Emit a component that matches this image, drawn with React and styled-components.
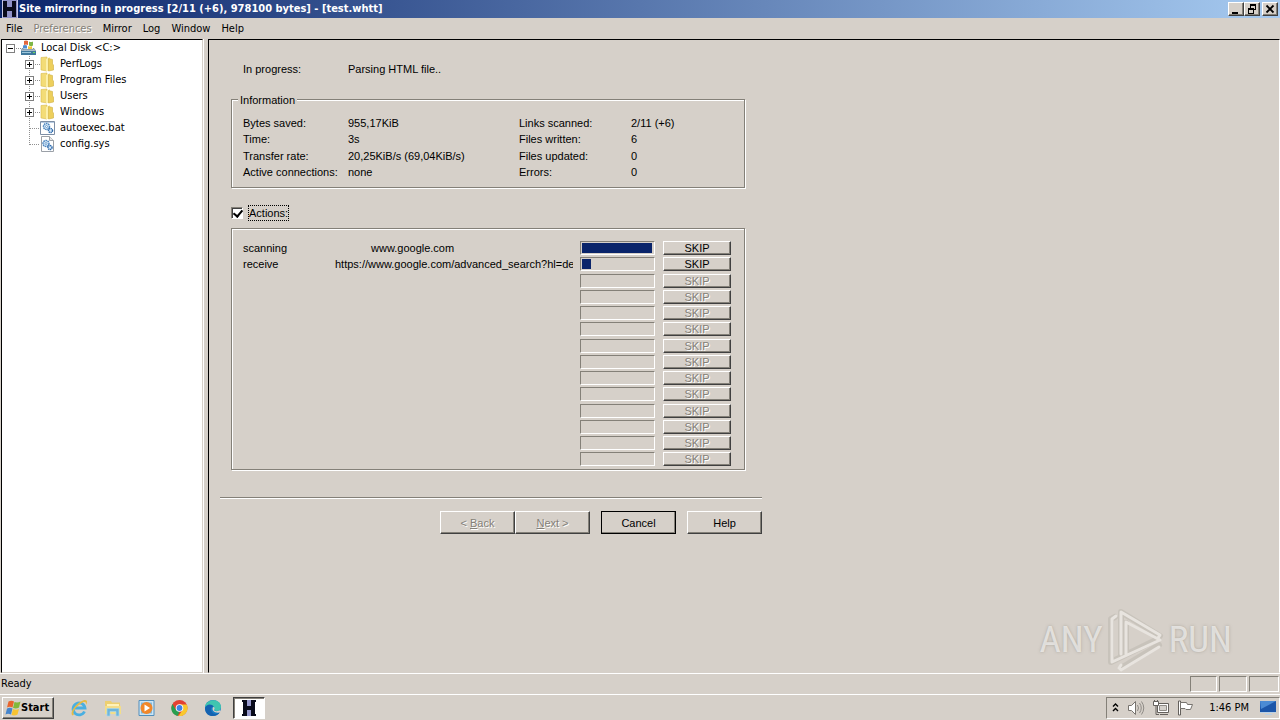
import React from "react";
import styled, { createGlobalStyle, css } from "styled-components";

const face = "#d6d0c9";
const shade = "#848078";
const dark = "#404040";
const light = "#ffffff";
const navy = "#0a246a";
const uiFont = '"DejaVu Sans Condensed", "DejaVu Sans", sans-serif';
const dialogFont = '"Liberation Sans", Arial, sans-serif';

const GlobalStyle = createGlobalStyle`
  * { box-sizing: border-box; }
  body { margin: 0; background: ${face}; color: #000; font: 11px/16px ${uiFont}; }
  button, input { font: inherit; color: inherit; }
`;

const raised = css`
  background: ${face};
  border: 1px solid;
  border-color: ${light} ${dark} ${dark} ${light};
  box-shadow: inset -1px -1px 0 ${shade};
`;

const sunken = css`
  border: 1px solid;
  border-color: ${shade} ${light} ${light} ${shade};
`;

const Desktop = styled.div`
  position: relative;
  display: flex;
  flex-direction: column;
  min-height: 100vh;
`;

const TitleBar = styled.header`
  display: flex;
  align-items: center;
  height: 18px;
  padding: 0 2px;
  color: #fff;
  background: linear-gradient(90deg, ${navy}, #a6caf0);
`;

const Title = styled.h1`
  flex: 1;
  margin: 0 0 0 1px;
  font-size: 11px;
  font-weight: bold;
  white-space: nowrap;
`;

const CaptionButton = styled.button`
  ${raised}
  display: flex;
  align-items: center;
  justify-content: center;
  width: 16px;
  height: 14px;
  padding: 0;
  margin-left: ${(p) => (p.$apart ? 2 : 0)}px;
`;

const MenuBar = styled.nav`
  display: flex;
  height: 21px;
  padding-left: 1px;
`;

const MenuItem = styled.button`
  padding: 0 6px 0 5px;
  border: 0;
  background: none;
  white-space: nowrap;

  &:disabled {
    color: ${shade};
    text-shadow: 1px 1px 0 ${light};
  }
`;

const Workspace = styled.div`
  display: flex;
  flex: 1;
`;

const TreePane = styled.aside`
  flex: 0 0 202px;
  margin-left: 1px;
  padding-left: 4px;
  background: #fff;
  border: 1px solid;
  border-color: #000 ${face} ${face} #000;
`;

const Splitter = styled.div`
  width: 5px;
  border-left: 1px solid ${light};
`;

const MainPane = styled.main`
  flex: 1;
  padding: 21px 11px;
  border: 1px solid;
  border-color: #000 ${light} ${face} #000;
  font-family: ${dialogFont};
`;

const TreeList = styled.ul`
  margin: 0;
  padding: 0 0 0 ${(p) => (p.$nested ? 19 : 0)}px;
  list-style: none;
`;

const TreeRow = styled.div`
  display: flex;
  align-items: center;
  height: 16px;
  white-space: nowrap;
`;

const TreeLabel = styled.span`
  margin-left: 5px;
`;

const Page = styled.form`
  max-width: 542px;
`;

const Progress = styled.p`
  display: grid;
  grid-template-columns: 105px 1fr;
  margin: 0 0 22px 23px;
`;

const Group = styled.fieldset`
  position: relative;
  min-width: 0;
  margin: 0 17px 0 11px;
  padding: ${(p) => p.$pad};
  border: 1px solid ${shade};
  box-shadow: 1px 1px 0 ${light}, inset 1px 1px 0 ${light};
`;

const GroupTitle = styled.h2`
  position: absolute;
  top: -8px;
  left: 6px;
  margin: 0;
  padding: 0 2px;
  background: ${face};
  font-size: 11px;
  font-weight: normal;
`;

const Facts = styled.dl`
  display: grid;
  grid-template-columns: 105px 171px 112px 1fr;
  margin: 0;
  white-space: nowrap;

  & > :nth-child(n + 9):nth-child(-n + 12) {
    margin-top: 1px;
  }
`;

const Fact = styled.dd`
  margin: 0;
`;

const ActionsToggle = styled.label`
  display: flex;
  align-items: center;
  gap: 5px;
  margin: 17px 0 7px 11px;
`;

const CheckBox = styled.input`
  appearance: none;
  position: relative;
  width: 12px;
  height: 12px;
  margin: 0;
  background: #fff;
  border: 1px solid;
  border-color: ${shade} ${light} ${light} ${shade};
  box-shadow: inset 1px 1px 0 ${dark};

  &:checked::after {
    content: "";
    position: absolute;
    left: 3px;
    top: 0;
    width: 4px;
    height: 7px;
    border: solid #000;
    border-width: 0 2px 2px 0;
    transform: rotate(40deg);
  }
`;

const FocusText = styled.span`
  border: 1px dotted #000;
  line-height: 14px;
`;

const Action = styled.div`
  display: grid;
  grid-template-columns: 92px 238px 75px 68px;
  align-items: center;
  height: 16px;

  &:nth-of-type(4n + 3) {
    margin-top: 1px;
  }
`;

const Address = styled.span`
  overflow: hidden;
  padding-left: ${(p) => (p.$indented ? 36 : 0)}px;
  white-space: nowrap;
`;

const Meter = styled.div`
  ${sunken}
  height: 14px;
  padding: 1px 2px 1px 1px;
  margin: 0 -7px 0 7px;
`;

const MeterFill = styled.div`
  height: 10px;
  background: ${navy};
`;

const PushButton = styled.button`
  ${raised}
  padding: 0;
  white-space: nowrap;

  &:disabled {
    color: ${shade};
    text-shadow: 1px 1px 0 ${light};
  }
`;

const SkipButton = styled(PushButton)`
  height: 14px;
  margin: 0 -15px 0 15px;
  line-height: 12px;
`;

const WizardButton = styled(PushButton)`
  width: 75px;
  height: 23px;
  outline: ${(p) => (p.$primary ? "1px solid #000" : "0")};
  outline-offset: -1px;
  margin-left: ${(p) => (p.$apart ? 11 : 0)}px;
`;

const Rule = styled.hr`
  height: 2px;
  margin: 27px 0 12px;
  border: 0;
  border-top: 1px solid ${shade};
  border-bottom: 1px solid ${light};
`;

const WizardButtons = styled.div`
  display: flex;
  justify-content: flex-end;
`;

const StatusBar = styled.footer`
  display: flex;
  align-items: center;
  gap: 2px;
  height: 21px;
  padding: 0 1px;
  border-top: 1px solid ${light};
`;

const StatusText = styled.span`
  flex: 1;
`;

const StatusCell = styled.span`
  ${sunken}
  width: ${(p) => p.$width}px;
  height: 16px;
`;

const TaskBar = styled.footer`
  display: flex;
  align-items: center;
  height: 26px;
  padding: 0 0 0 2px;
  border-top: 1px solid ${light};
`;

const StartButton = styled.button`
  ${raised}
  display: flex;
  align-items: center;
  width: 52px;
  height: 22px;
  padding: 0 2px;
  font-weight: bold;
`;

const QuickLaunch = styled.div`
  display: flex;
  flex: 1;
  align-items: center;
  gap: 16px;
  margin-left: 16px;
`;

const LaunchButton = styled.button`
  display: flex;
  padding: 0;
  border: 0;
  background: none;
`;

const TaskButton = styled.button`
  display: flex;
  justify-content: center;
  width: 32px;
  height: 22px;
  margin-left: -5px;
  padding: 1px 0;
  background: #fff;
  border: 1px solid;
  border-color: ${dark} ${light} ${light} ${dark};
  box-shadow: inset 1px 1px 0 ${shade};
`;

const Tray = styled.div`
  ${sunken}
  display: flex;
  align-items: center;
  gap: 8px;
  height: 22px;
  padding: 0 3px 0 5px;
`;

const Clock = styled.time`
  margin: 0 3px 0 7px;
`;

const Watermark = styled.div`
  position: absolute;
  right: 48px;
  bottom: 48px;
  display: flex;
  align-items: center;
  gap: 4px;
  color: rgba(255, 255, 255, 0.6);
  font: 400 37px/62px "Roboto Condensed", Roboto, "Liberation Sans", sans-serif;
  text-shadow: 0 0 3px rgba(130, 125, 115, 0.5);
  pointer-events: none;
`;

const AppIcon = () => (
  <svg width="16" height="18" viewBox="0 0 16 18" aria-hidden="true">
    <rect width="16" height="18" fill="#8f92c8" />
    <path d="M0 0h1v18H0zM15 0h1v18h-1z" fill="#c5c7e4" />
    <path d="M1 1h4v6h5V1h4v16h-4v-6H5v6H1z" fill="#090b1b" />
  </svg>
);

const TaskIcon = () => (
  <svg width="18" height="18" viewBox="0 0 18 18" aria-hidden="true">
    <rect x="6" y="1" width="6" height="16" fill="#9698cc" />
    <path d="M2 1h5v6h4V1h5v2h-1v12h1v2h-5v-6H7v6H2v-2h1V3H2z" fill="#090b1b" />
  </svg>
);

const Expander = ({ open, root }) => (
  <svg width="15" height="16" aria-hidden="true">
    <path d={root ? "M10 8.5h5" : "M4.5 0v16M10 8.5h5"} stroke="#909090" strokeDasharray="1 1" />
    <rect x="0.5" y="4.5" width="8" height="8" fill="#fff" stroke="#808080" />
    <path d={open ? "M2 8.5h5" : "M2 8.5h5M4.5 6v5"} stroke="#000" />
  </svg>
);

const Branch = ({ last }) => (
  <svg width="15" height="16" aria-hidden="true">
    <path d={last ? "M4.5 0v9M5 8.5h10" : "M4.5 0v16M5 8.5h10"} fill="none" stroke="#909090" strokeDasharray="1 1" />
  </svg>
);

const DiskIcon = () => (
  <svg width="15" height="16" viewBox="0 0 15 16" aria-hidden="true">
    <path d="M3 1q2-1 4 0v4q-2-1-4 0z" fill="#e2663c" />
    <path d="M8 1.500q2 1 4 0v4q-2 1-4 0z" fill="#7db648" />
    <path d="M2 5.500q2-1 4 0v3H2z" fill="#4d8bd0" />
    <path d="M7 6q2 1 4 0v3H7z" fill="#f4c63c" />
    <path d="M1 8.500h1v1h10v-1h1l2 3H0z" fill="#a9bcc9" stroke="#65798a" strokeWidth=".6" />
    <path d="M0 11h15v4H0z" fill="#3f789c" />
    <path d="M1 12h9v1H1z" fill="#9cc7dc" />
    <path d="M12 12h2v1h-2z" fill="#69dc62" />
  </svg>
);

const FolderIcon = () => (
  <svg width="15" height="16" viewBox="0 0 15 16" aria-hidden="true">
    <path d="M1 1.500L7 1v14l-6-1z" fill="#f3dc77" stroke="#d9bb4c" strokeWidth=".6" />
    <path d="M6 3l4-2v13l-4 1.500z" fill="#fbefab" />
    <path d="M8.500 2.500l4 1V8l1 1v5l-5 1z" fill="#edcf5c" stroke="#cfae40" strokeWidth=".6" />
  </svg>
);

const Gears = () => (
  <>
    <circle cx="6.500" cy="6.500" r="3" fill="#d9eaf8" stroke="#4c86c0" strokeWidth="1.500" strokeDasharray="1.600 .6" />
    <circle cx="6.500" cy="6.500" r="1" fill="#fff" stroke="#4c86c0" strokeWidth=".7" />
    <circle cx="10.500" cy="10.500" r="2" fill="#d9eaf8" stroke="#2c69ac" strokeWidth="1.500" strokeDasharray="1.200 .5" />
  </>
);

const BatchIcon = () => (
  <svg width="15" height="16" viewBox="0 0 15 16" aria-hidden="true">
    <path d="M.5 1.500h14v13H.5z" fill="#fff" stroke="#7d8ea5" />
    <path d="M1 2h13v1H1z" fill="#b8cce2" />
    <Gears />
  </svg>
);

const SystemIcon = () => (
  <svg width="15" height="16" viewBox="0 0 15 16" aria-hidden="true">
    <path d="M1.500.5h8l4 4v11h-12z" fill="#fff" stroke="#9ba0a7" />
    <path d="M9.500.5v4h4" fill="#e8e8e8" stroke="#9ba0a7" />
    <g transform="translate(-.5 1)"><Gears /></g>
  </svg>
);

const FlagIcon = () => (
  <svg width="16" height="16" viewBox="0 0 15 16" aria-hidden="true">
    <path d="M3 1.500q3-1.500 5.500 0L7 7.500q-3-1.500-5.500 0z" fill="#e8642c" />
    <path d="M9 2q3 1 6-.500l-1.500 6q-2.500 1.500-6 .500z" fill="#82b83b" />
    <path d="M1.500 8.500q3-1.500 5.500 0l-1.500 6q-3-1.500-5.500 0z" fill="#4685cc" />
    <path d="M7.500 9q3 1.500 6 0L12 14.500q-3 1.500-6 .500z" fill="#f7c331" />
  </svg>
);

const ExplorerIcon = () => (
  <svg width="18" height="18" viewBox="0 0 18 18" aria-hidden="true">
    <path d="M14.500 12.500A6 6 0 1 1 15 9H5" fill="none" stroke="#49afe1" strokeWidth="2.800" />
    <path d="M2.500 16.500C-1 14 6 4 13 1.500c4-1.500 5 1 3 4.500.5-3-1-3.500-3.500-2.500C6.500 7 1.500 13 4 15.500z" fill="#e6bb43" />
  </svg>
);

const LibraryIcon = () => (
  <svg width="18" height="18" viewBox="0 0 18 18" aria-hidden="true">
    <path d="M1 3.500V2h6l1 1.500h8V15H1z" fill="#edcf70" />
    <path d="M3 5h12v5H3z" fill="#fff2b8" />
    <path d="M1 7h16v8H1z" fill="#f3dd8a" />
    <path d="M3 17V9.500h12V17h-3v-4.500H6V17z" fill="#6fb5dc" stroke="#a6d7ed" strokeWidth=".7" />
  </svg>
);

const PlayerIcon = () => (
  <svg width="17" height="18" viewBox="0 0 17 18" aria-hidden="true">
    <path d="M1 1.500h15v15H1z" fill="#cce5f5" stroke="#528fbc" />
    <path d="M3 3.500h11v11H3z" fill="#7eb8df" />
    <circle cx="8.500" cy="9" r="6" fill="#f1872a" />
    <path d="M6.500 5.500L12 9l-5.500 3.500z" fill="#fff" />
  </svg>
);

const ChromeIcon = () => (
  <svg width="17" height="18" viewBox="0 0 17 18" aria-hidden="true">
    <circle cx="8.500" cy="9" r="8" fill="#e34133" />
    <path d="M1.500 5L5 11l3.500 2-2 4A8 8 0 0 1 1.500 5z" fill="#279f50" />
    <path d="M8.500 5.500h7.200A8 8 0 0 1 7.500 17l4-6z" fill="#f9c82d" />
    <circle cx="8.500" cy="9" r="3.800" fill="#fff" />
    <circle cx="8.500" cy="9" r="2.900" fill="#4083e5" />
  </svg>
);

const EdgeIcon = () => (
  <svg width="18" height="18" viewBox="0 0 18 18" aria-hidden="true">
    <circle cx="9" cy="9" r="8" fill="#177cc5" />
    <path d="M1 8C2-1 17-1 17 8c0 4-5 5-7 3 2-3-3-6-9-3z" fill="#40c5b0" />
    <path d="M1 9c1-4 7-5 9-1-3-1-4 3-2 5 2 3 6 2 8 0-3 6-15 6-15-4z" fill="#1462b0" />
    <path d="M9 8c2 0 2 2 1 3 1 2 5 1 6 0l1 2c-5 2-10-1-8-5z" fill="#d6d0c9" />
  </svg>
);

const TrayIcons = () => (
  <>
    <svg width="7" height="12" role="img" aria-label="Show hidden icons">
      <path d="M1 4.500l2.500-2.500L6 4.500M1 9l2.500-2.500L6 9" fill="none" stroke="#000" strokeWidth="1.400" />
    </svg>
    <svg width="18" height="16" role="img" aria-label="Volume">
      <path d="M1.500 5.500h3l4-4v13l-4-4h-3z" fill="#fff" stroke="#77736e" />
      <path d="M10.500 5q2 3 0 6M12.500 3q3.500 5 0 10M14.500 1.500q4.500 6.500 0 13" fill="none" stroke="#8f8b86" />
    </svg>
    <svg width="16" height="16" role="img" aria-label="Network">
      <path d="M4.500 3.500h11v9h-11zM7 14.500h8" fill="#fff" stroke="#64605c" />
      <path d="M6.500 5.500h7v5h-7z" fill="#d5d1cc" stroke="#8f8b86" />
      <path d="M.5 1.500h5v4h-5z" fill="#fff" stroke="#64605c" />
      <path d="M1.500 0v2M4.500 0v2M3 5.500v9h3" fill="none" stroke="#64605c" />
    </svg>
    <svg width="17" height="16" role="img" aria-label="Action center">
      <path d="M1.500 1h2v14h-2z" fill="#fff" stroke="#64605c" />
      <path d="M3.500 2.500h6l1 2h5l-2 5H9l-1-1H3.500z" fill="#fff" stroke="#77736e" />
    </svg>
  </>
);

const DisplayIcon = () => (
  <svg width="16" height="16" role="img" aria-label="Show desktop">
    <path d="M0 1h16v11H0z" fill="#1c56a9" />
    <path d="M0 1h16L1 9z" fill="#4b8bd4" />
    <path d="M0 12h16v1H0zM5 14h7v1H5z" fill="#b9d0e6" />
  </svg>
);

const PlayMark = () => (
  <svg width="58" height="64" viewBox="0 0 58 64" aria-hidden="true">
    <g fill="none" strokeLinejoin="round" strokeLinecap="round">
      <path d="M8 9L4 11v43l47-23M14 48V4l39 24M19 15v27M14 60l38-23" stroke="#aaa49d" strokeOpacity=".3" strokeWidth="6" />
      <path d="M9 8L5 11v43l48-22L19 14M14 46V4l39 23-2 3M14 57l-2 3 2 2 38-23M19 15v31" stroke="#e8e4df" strokeWidth="3" />
    </g>
  </svg>
);

const menus = ["File", "Preferences", "Mirror", "Log", "Window", "Help"];
const folders = ["PerfLogs", "Program Files", "Users", "Windows"];
const facts = [
  ["Bytes saved:", "955,17KiB", "Links scanned:", "2/11 (+6)"],
  ["Time:", "3s", "Files written:", "6"],
  ["Transfer rate:", "20,25KiB/s (69,04KiB/s)", "Files updated:", "0"],
  ["Active connections:", "none", "Errors:", "0"],
];
const actions = [
  { state: "scanning", address: "www.google.com", percent: 100, indented: true },
  { state: "receive", address: "https://www.google.com/advanced_search?hl=de", percent: 13 },
  ...Array.from({ length: 12 }, () => ({ idle: true, percent: 0 })),
];
const launchers = [
  ["Internet Explorer", ExplorerIcon],
  ["Windows Explorer", LibraryIcon],
  ["Media Player", PlayerIcon],
  ["Chrome", ChromeIcon],
  ["Edge", EdgeIcon],
];

export default function App() {
  return (
    <Desktop>
      <GlobalStyle />
      <TitleBar>
        <AppIcon />
        <Title>Site mirroring in progress [2/11 (+6), 978100 bytes] - [test.whtt]</Title>
        <CaptionButton aria-label="Minimize">
          <svg width="10" height="10"><path d="M1 8h6v2H1z" /></svg>
        </CaptionButton>
        <CaptionButton aria-label="Restore">
          <svg width="10" height="10">
            <path d="M3.500 1v3M8.500 1v5M6 5.500h3M1.500 4v5M6.500 4v5M1 9.500h6" fill="none" stroke="#000" />
            <path d="M3 0h6v2H3zM1 4h6v2H1z" />
          </svg>
        </CaptionButton>
        <CaptionButton aria-label="Close" $apart>
          <svg width="10" height="10"><path d="M1.500 1.500l7 7M8.500 1.500l-7 7" stroke="#000" strokeWidth="1.800" /></svg>
        </CaptionButton>
      </TitleBar>
      <MenuBar>
        {menus.map((m) => <MenuItem key={m} disabled={m === "Preferences"}>{m}</MenuItem>)}
      </MenuBar>
      <Workspace>
        <TreePane>
          <TreeList>
            <li>
              <TreeRow><Expander open root /><DiskIcon /><TreeLabel>Local Disk &lt;C:&gt;</TreeLabel></TreeRow>
              <TreeList $nested>
                {folders.map((f) => (
                  <li key={f}><TreeRow><Expander /><FolderIcon /><TreeLabel>{f}</TreeLabel></TreeRow></li>
                ))}
                <li><TreeRow><Branch /><BatchIcon /><TreeLabel>autoexec.bat</TreeLabel></TreeRow></li>
                <li><TreeRow><Branch last /><SystemIcon /><TreeLabel>config.sys</TreeLabel></TreeRow></li>
              </TreeList>
            </li>
          </TreeList>
        </TreePane>
        <Splitter />
        <MainPane>
          <Page onSubmit={(e) => e.preventDefault()}>
            <Progress><span>In progress:</span><span>Parsing HTML file..</span></Progress>
            <Group $pad="15px 11px 7px">
              <GroupTitle>Information</GroupTitle>
              <Facts>
                {facts.flat().map((text, i) => (
                  <Fact as={i % 2 ? "dd" : "dt"} key={i}>{text}</Fact>
                ))}
              </Facts>
            </Group>
            <ActionsToggle>
              <CheckBox type="checkbox" defaultChecked />
              <FocusText>Actions:</FocusText>
            </ActionsToggle>
            <Group $pad="11px 11px 2px">
              {actions.map((a, i) => (
                <Action key={i}>
                  <span>{a.state}</span>
                  <Address $indented={a.indented}>{a.address}</Address>
                  <Meter role="progressbar" aria-label={`Action ${i + 1}`} aria-valuenow={a.percent}>
                    <MeterFill style={{ width: `${a.percent}%` }} />
                  </Meter>
                  <SkipButton type="button" disabled={a.idle}>SKIP</SkipButton>
                </Action>
              ))}
            </Group>
            <Rule />
            <WizardButtons>
              <WizardButton type="button" disabled>&lt; <u>B</u>ack</WizardButton>
              <WizardButton type="button" disabled><u>N</u>ext &gt;</WizardButton>
              <WizardButton type="button" $primary $apart>Cancel</WizardButton>
              <WizardButton type="button" $apart>Help</WizardButton>
            </WizardButtons>
          </Page>
        </MainPane>
      </Workspace>
      <StatusBar>
        <StatusText>Ready</StatusText>
        <StatusCell $width={27} />
        <StatusCell $width={28} />
        <StatusCell $width={30} />
      </StatusBar>
      <TaskBar>
        <StartButton><FlagIcon />Start</StartButton>
        <QuickLaunch>
          {launchers.map(([name, Icon]) => <LaunchButton key={name} aria-label={name}><Icon /></LaunchButton>)}
          <TaskButton aria-label="Site mirroring"><TaskIcon /></TaskButton>
        </QuickLaunch>
        <Tray>
          <TrayIcons />
          <Clock>1:46 PM</Clock>
          <DisplayIcon />
        </Tray>
      </TaskBar>
      <Watermark><span>ANY</span><PlayMark /><span>RUN</span></Watermark>
    </Desktop>
  );
}
